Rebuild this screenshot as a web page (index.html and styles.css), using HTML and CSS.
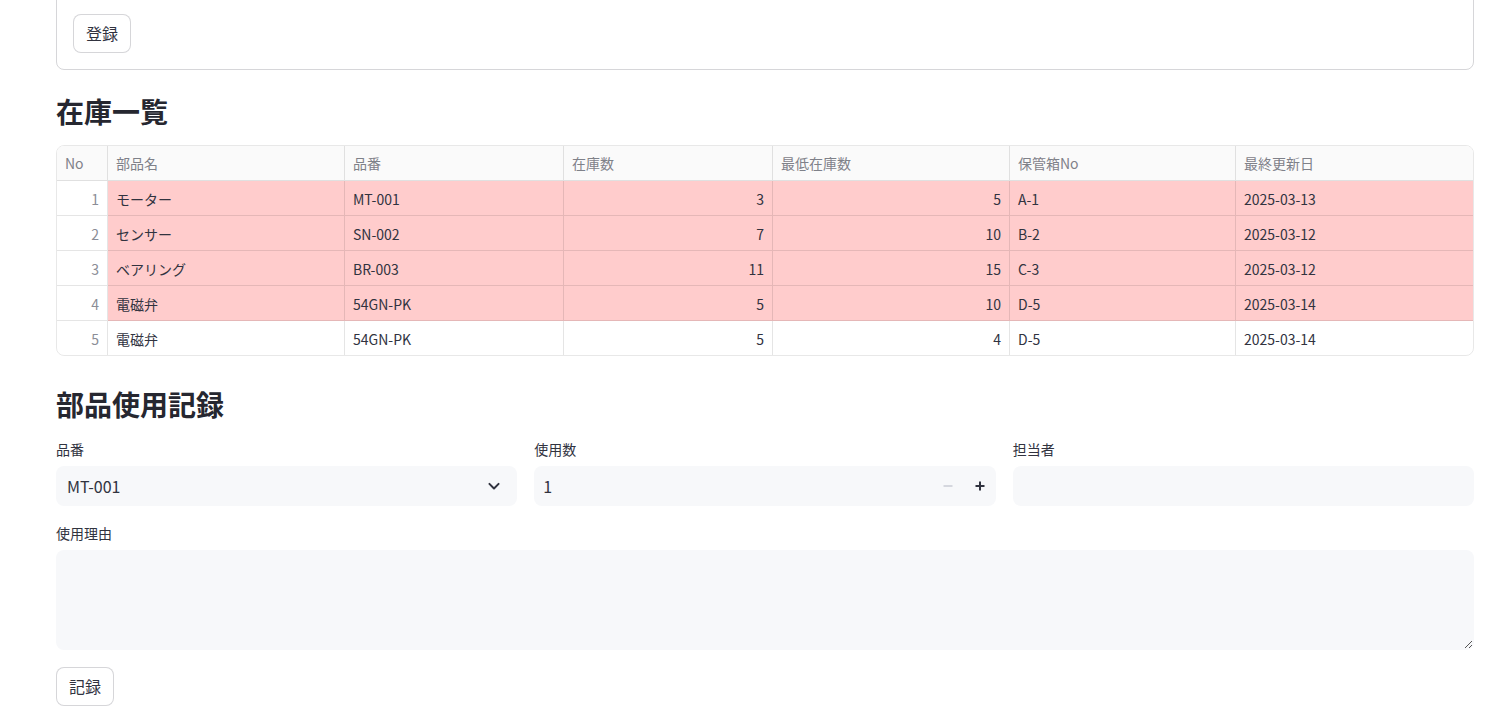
FILE: index.html
```html
<!DOCTYPE html>
<html lang="ja">
<head>
<meta charset="utf-8">
<title>在庫管理</title>
<link rel="stylesheet" href="styles.css">
</head>
<body>
<main class="main">
  <section class="form-box">
    <button class="btn">登録</button>
  </section>

  <h3 class="heading h-first">在庫一覧</h3>

  <div class="grid">
    <div class="row head">
      <div class="c idx">No</div>
      <div class="c">部品名</div>
      <div class="c">品番</div>
      <div class="c">在庫数</div>
      <div class="c">最低在庫数</div>
      <div class="c">保管箱No</div>
      <div class="c">最終更新日</div>
    </div>
    <div class="row low">
      <div class="c idx num">1</div>
      <div class="c jp">モーター</div>
      <div class="c">MT-001</div>
      <div class="c num">3</div>
      <div class="c num">5</div>
      <div class="c">A-1</div>
      <div class="c">2025-03-13</div>
    </div>
    <div class="row low">
      <div class="c idx num">2</div>
      <div class="c jp">センサー</div>
      <div class="c">SN-002</div>
      <div class="c num">7</div>
      <div class="c num">10</div>
      <div class="c">B-2</div>
      <div class="c">2025-03-12</div>
    </div>
    <div class="row low">
      <div class="c idx num">3</div>
      <div class="c jp">ベアリング</div>
      <div class="c">BR-003</div>
      <div class="c num">11</div>
      <div class="c num">15</div>
      <div class="c">C-3</div>
      <div class="c">2025-03-12</div>
    </div>
    <div class="row low">
      <div class="c idx num">4</div>
      <div class="c jp">電磁弁</div>
      <div class="c">54GN-PK</div>
      <div class="c num">5</div>
      <div class="c num">10</div>
      <div class="c">D-5</div>
      <div class="c">2025-03-14</div>
    </div>
    <div class="row last">
      <div class="c idx num">5</div>
      <div class="c jp">電磁弁</div>
      <div class="c">54GN-PK</div>
      <div class="c num">5</div>
      <div class="c num">4</div>
      <div class="c">D-5</div>
      <div class="c">2025-03-14</div>
    </div>
  </div>

  <h3 class="heading h-second">部品使用記録</h3>

  <div class="fields">
    <div class="field">
      <label class="label">品番</label>
      <div class="input select">
        <span>MT-001</span>
        <svg class="chev" width="20" height="20" viewBox="0 0 24 24"><path d="M6.5 9.5 12 15l5.5-5.5" fill="none" stroke="#31333f" stroke-width="2.4" stroke-linecap="round" stroke-linejoin="round"/></svg>
      </div>
    </div>
    <div class="field">
      <label class="label">使用数</label>
      <div class="input number">
        <span class="numval">1</span>
        <span class="steps">
          <span class="step">
            <svg width="12" height="12" viewBox="0 0 12 12"><rect x="1.5" y="5" width="9" height="2" fill="#d5d7de"/></svg>
          </span>
          <span class="step">
            <svg width="12" height="12" viewBox="0 0 12 12"><rect x="1.5" y="5" width="9" height="2" fill="#31333f"/><rect x="5" y="1.5" width="2" height="9" fill="#31333f"/></svg>
          </span>
        </span>
      </div>
    </div>
    <div class="field">
      <label class="label">担当者</label>
      <div class="input"></div>
    </div>
  </div>

  <div class="field full">
    <label class="label">使用理由</label>
    <div class="textarea">
      <svg class="grip" width="10" height="10" viewBox="0 0 10 10"><path d="M9 2 2 9M9 6 6 9" stroke="#555" stroke-width="1"/></svg>
    </div>
  </div>

  <button class="btn btn-record">記録</button>
</main>
</body>
</html>
```

FILE: styles.css
```css
* { box-sizing: border-box; }

html, body {
  margin: 0;
  padding: 0;
  overflow: hidden;
  background: #ffffff;
}

body {
  font-family: "Noto Sans CJK JP", "Noto Sans", sans-serif;
  color: #31333f;
}

.main {
  width: 1418px;
  margin-left: 56px;
  display: flex;
  flex-direction: column;
}

.form-box {
  margin-top: -20px;
  border: 1px solid rgba(49, 51, 63, 0.2);
  border-radius: 8px;
  padding: 33px 16px 16px 16px;
}

.btn {
  font-family: inherit;
  font-size: 16px;
  color: #31333f;
  background: #ffffff;
  border: 1px solid rgba(49, 51, 63, 0.2);
  border-radius: 8px;
  height: 39px;
  padding: 0 12px 2px 12px;
  line-height: 1;
  cursor: pointer;
  align-self: flex-start;
}

.heading {
  font-size: 28px;
  font-weight: 700;
  line-height: 34px;
  margin: 0;
  color: #262730;
}

.h-first { margin-top: 24px; margin-bottom: 17px; }
.h-second { margin-top: 31px; margin-bottom: 16px; }

/* data grid */
.grid {
  border: 1px solid rgba(0, 0, 0, 0.09);
  border-radius: 8px;
  overflow: hidden;
  font-size: 14px;
}

.row {
  display: grid;
  grid-template-columns: 51px 237px 219px 209px 237px 226px 1fr;
  height: 35px;
}

.row.last { height: 34px; }

.row.head .c {
  background: #fafafa;
  color: #7f8189;
  padding-top: 0;
}

.c {
  display: flex;
  align-items: center;
  padding: 1px 8px 0 8px;
  border-right: 1px solid rgba(0, 0, 0, 0.1);
  border-bottom: 1px solid rgba(0, 0, 0, 0.1);
  white-space: nowrap;
  overflow: hidden;
}

.row.last .c { border-bottom: 0; }

.c:last-child { border-right: 0; }

.row.low .c:not(.idx) { background: #ffcccc; }

.c.num { justify-content: flex-end; }

.c.idx {
  color: #8b8d96;
}

.row.head .c.idx { justify-content: flex-start; }

.c.jp { font-size: 14px; }

/* form fields */
.fields {
  display: grid;
  grid-template-columns: 1fr 1fr 1fr;
  column-gap: 17px;
}

.field {
  display: flex;
  flex-direction: column;
}

.label {
  font-size: 14px;
  line-height: 24px;
  height: 24px;
  margin-bottom: 5px;
  color: #31333f;
}

.input {
  height: 40px;
  background: #f7f8fa;
  border-radius: 8px;
  display: flex;
  align-items: center;
  font-size: 16px;
}

.select {
  padding: 0 13px 0 11px;
  justify-content: space-between;
}

.number {
  padding-left: 9px;
  justify-content: space-between;
}

.steps {
  display: flex;
  height: 100%;
}

.step {
  width: 32px;
  height: 100%;
  display: flex;
  align-items: center;
  justify-content: center;
}

.full { margin-top: 15px; }

.textarea {
  height: 100px;
  background: #f7f8fa;
  border-radius: 8px;
  position: relative;
}

.grip {
  position: absolute;
  right: 1px;
  bottom: 1px;
}

.btn-record {
  margin-top: 17px;
}
```
